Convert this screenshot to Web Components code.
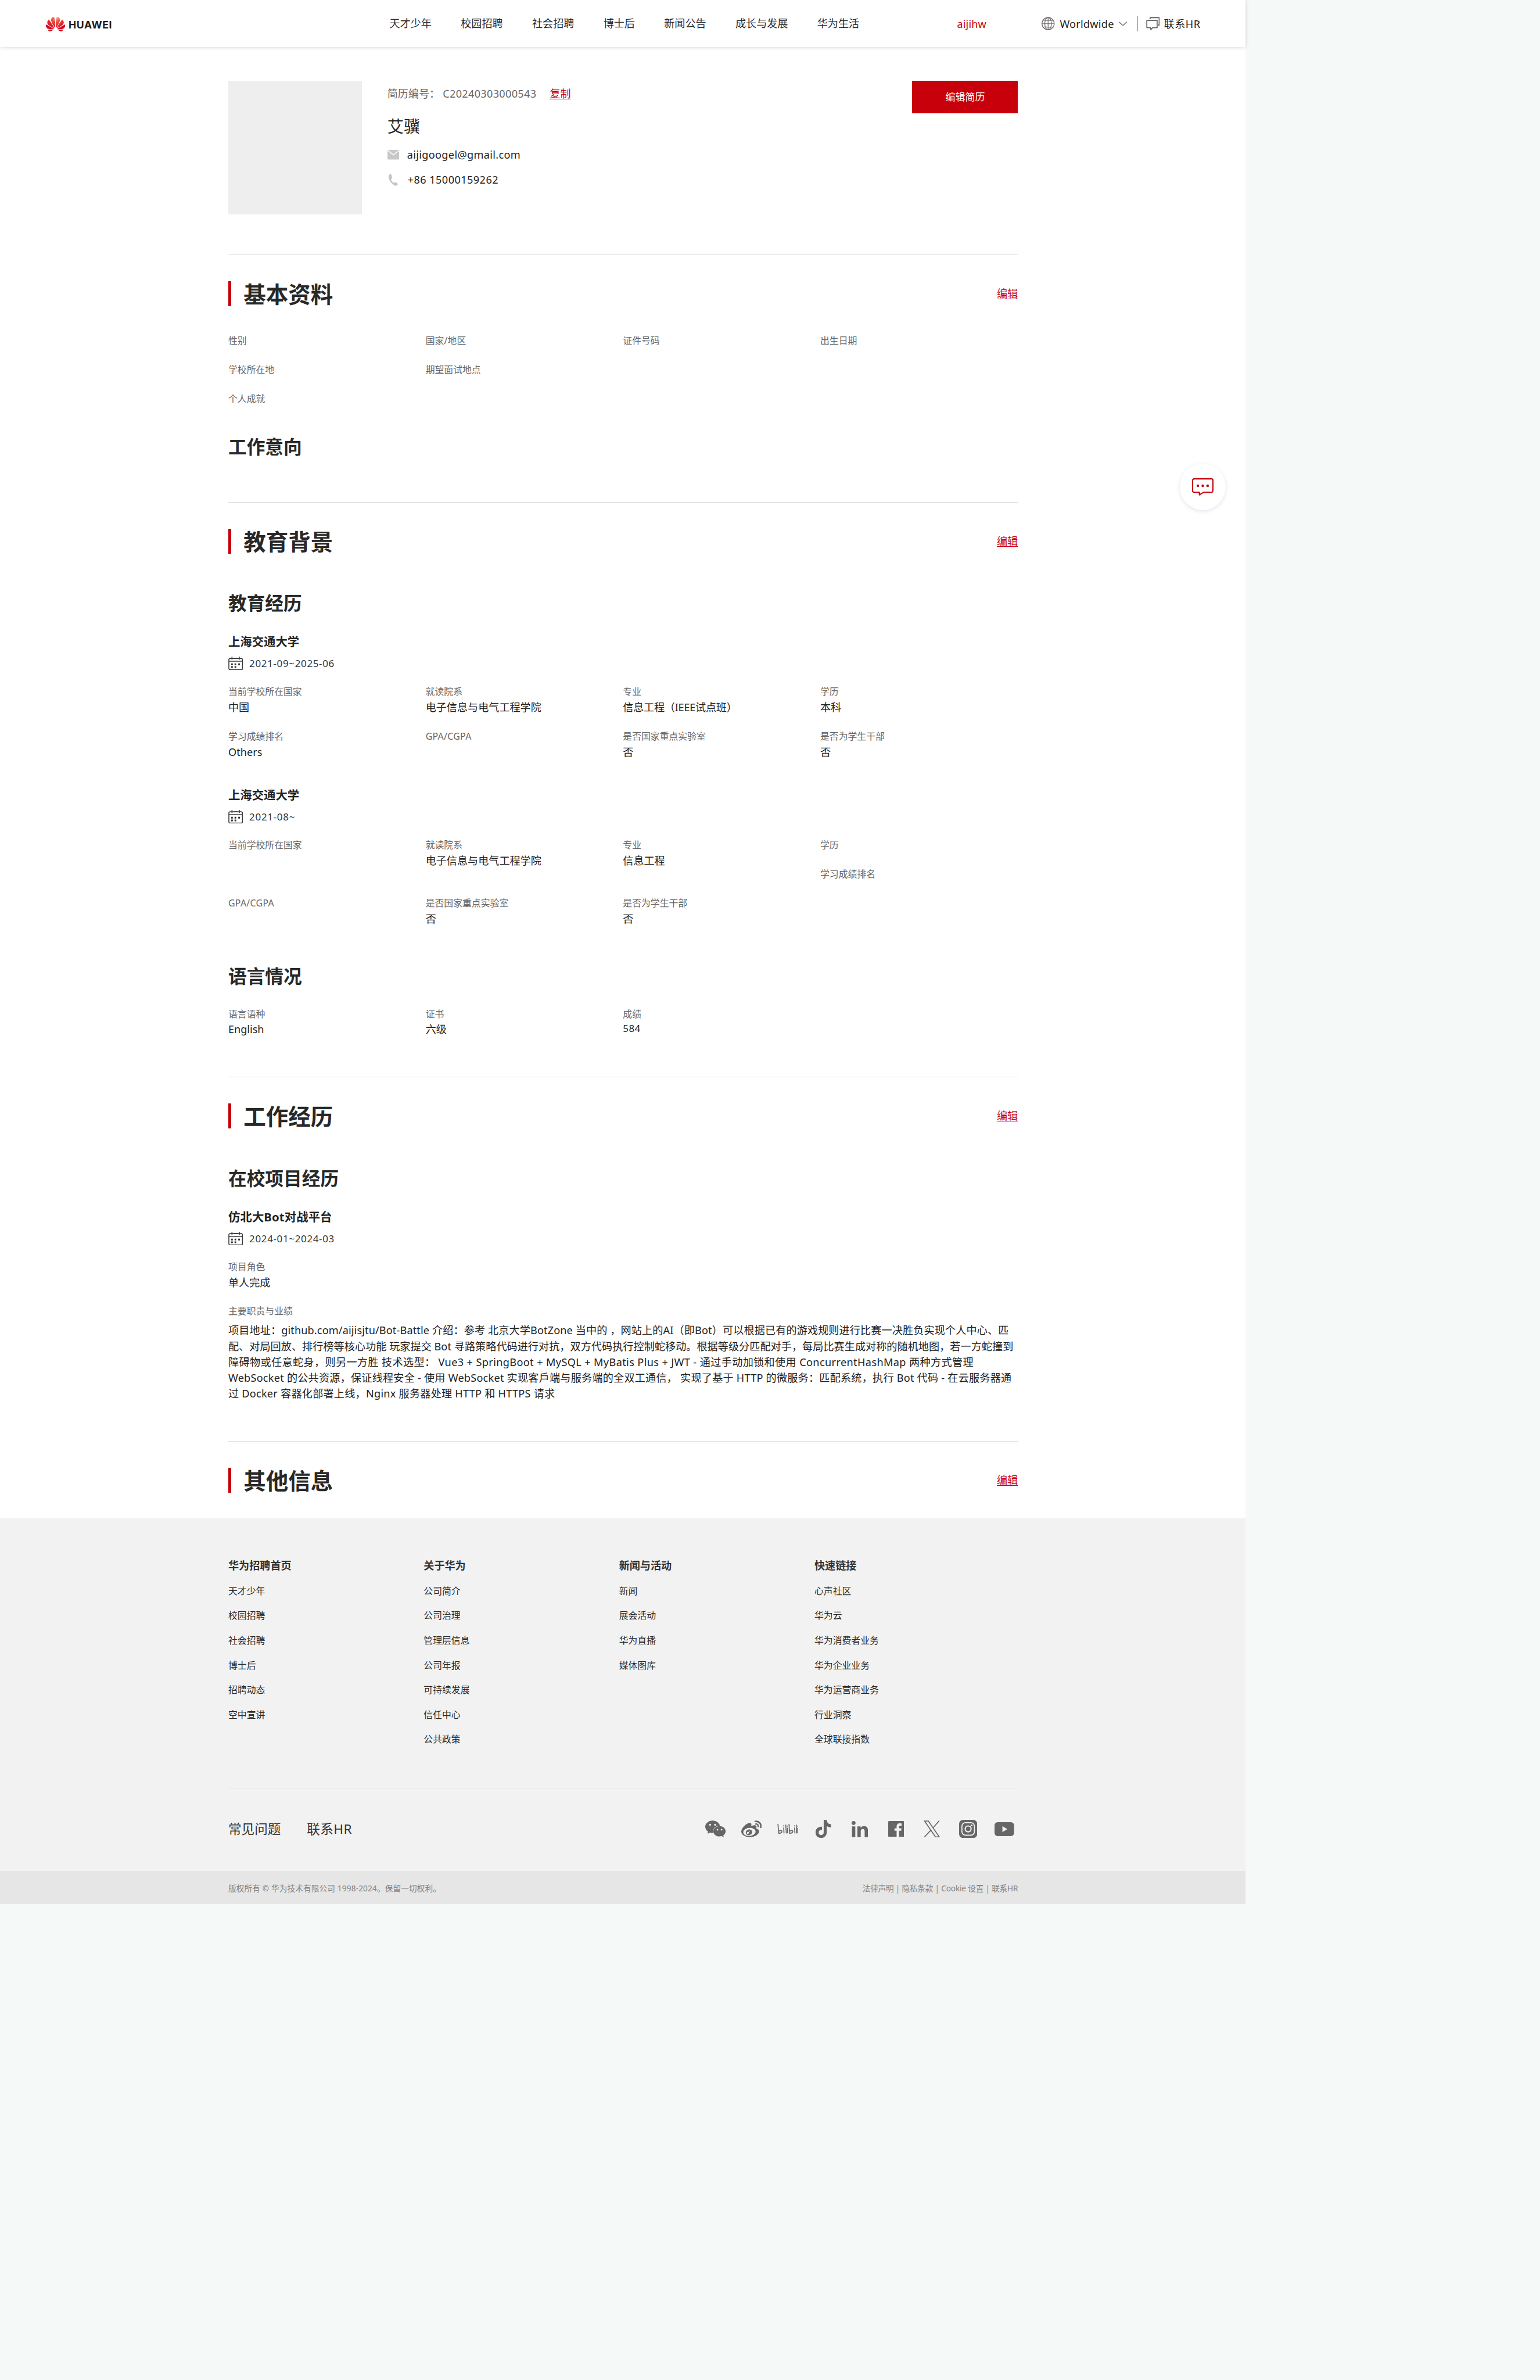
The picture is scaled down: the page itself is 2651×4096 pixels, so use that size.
<!DOCTYPE html>
<html lang="zh-CN">
<head>
<meta charset="utf-8">
<title>华为招聘 - 我的简历</title>
<style>
html{zoom:.97607;background:#f5f9f8}
body{margin:0;width:2716px;height:4196px;overflow:hidden;background:#f5f9f8;font-family:"Noto Sans","Noto Sans CJK SC",sans-serif;font-size:18.56px;line-height:27.84px;color:#222}
</style>
</head>
<body>
<resume-page>
  <site-header></site-header>
  <profile-card></profile-card>

  <resume-section heading="基本资料" style="height:436.4px">
    <field-grid style="margin-top:47px">
      <info-field label="性别"></info-field><info-field label="国家/地区" lw="71.5"></info-field><info-field label="证件号码"></info-field><info-field label="出生日期"></info-field>
      <info-field label="学校所在地"></info-field><info-field label="期望面试地点" style="grid-column:span 3"></info-field>
      <info-field label="个人成就"></info-field>
    </field-grid>
    <sub-heading style="margin-top:23px">工作意向</sub-heading>
  </resume-section>

  <resume-section heading="教育背景" style="height:1013.7px">
    <sub-heading style="margin-top:63.5px">教育经历</sub-heading>
    <entry-head name="上海交通大学" date="2021-09~2025-06" dw="150.5"></entry-head>
    <field-grid style="margin-top:22.4px">
      <info-field label="当前学校所在国家" value="中国"></info-field><info-field label="就读院系" value="电子信息与电气工程学院"></info-field><info-field label="专业" value="信息工程（IEEE试点班）" vw="201"></info-field><info-field label="学历" value="本科"></info-field>
      <info-field label="学习成绩排名" value="Others" vw="60"></info-field><info-field label="GPA/CGPA" lw="81"></info-field><info-field label="是否国家重点实验室" value="否"></info-field><info-field label="是否为学生干部" value="否"></info-field>
    </field-grid>
    <entry-head name="上海交通大学" date="2021-08~" dw="81" style="margin-top:21.6px"></entry-head>
    <field-grid style="margin-top:22.4px">
      <info-field label="当前学校所在国家"></info-field><info-field label="就读院系" value="电子信息与电气工程学院"></info-field><info-field label="专业" value="信息工程"></info-field><div><info-field label="学历"></info-field><info-field label="学习成绩排名"></info-field></div>
      <info-field label="GPA/CGPA" lw="81"></info-field><info-field label="是否国家重点实验室" value="否"></info-field><info-field label="是否为学生干部" value="否"></info-field>
    </field-grid>
    <sub-heading style="margin-top:40.3px">语言情况</sub-heading>
    <field-grid style="margin-top:28px">
      <info-field label="语言语种" value="English" vw="63"></info-field><info-field label="证书" value="六级"></info-field><info-field label="成绩" value="584" vw="31" style="--value-size:17.4px;--value-lh:24px"></info-field>
    </field-grid>
  </resume-section>

  <resume-section heading="工作经历" style="height:642.1px">
    <sub-heading style="margin-top:64px">在校项目经历</sub-heading>
    <entry-head name="仿北大Bot对战平台" nw="183" date="2024-01~2024-03" dw="150.5"></entry-head>
    <field-grid style="margin-top:22px">
      <info-field label="项目角色" value="单人完成" style="grid-column:span 4;--field-gap:22.8px"></info-field>
      <info-field label="主要职责与业绩" style="grid-column:span 4;--field-gap:0px"></info-field>
    </field-grid>
    <project-text style="margin-top:6.6px">
      <fit-text w="1376">项目地址：github.com/aijisjtu/Bot-Battle 介绍：参考 北京大学BotZone 当中的 ，网站上的AI（即Bot）可以根据已有的游戏规则进行比赛一决胜负实现个人中心、匹</fit-text>
      <fit-text w="1384">配、对局回放、排行榜等核心功能 玩家提交 Bot 寻路策略代码进行对抗，双方代码执行控制蛇移动。根据等级分匹配对手，每局比赛生成对称的随机地图，若一方蛇撞到</fit-text>
      <fit-text w="1314">障碍物或任意蛇身，则另一方胜 技术选型： Vue3 + SpringBoot + MySQL + MyBatis Plus + JWT - 通过手动加锁和使用 ConcurrentHashMap 两种方式管理</fit-text>
      <fit-text w="1381">WebSocket 的公共资源，保证线程安全 - 使用 WebSocket 实现客戶端与服务端的全双工通信， 实现了基于 HTTP 的微服务：匹配系统，执行 Bot 代码 - 在云服务器通</fit-text>
      <fit-text w="576">过 Docker 容器化部署上线，Nginx 服务器处理 HTTP 和 HTTPS 请求</fit-text>
    </project-text>
  </resume-section>

  <resume-section heading="其他信息" style="height:136.8px"></resume-section>

  <site-footer></site-footer>
  <chat-bubble></chat-bubble>
</resume-page>

<script>
const ctx = document.createElement('canvas').getContext('2d');

class Base extends HTMLElement {
  connectedCallback() {
    if (this.shadowRoot) return;
    this.attachShadow({ mode: 'open' }).innerHTML =
      '<style>:host{display:block;box-sizing:border-box}*{box-sizing:border-box}svg{display:block;flex:none}a{color:inherit;text-decoration:none}</style>' + this.render();
  }
  attr(n) { return this.getAttribute(n) || ''; }
}
const define = (name, render) => customElements.define(name, class extends Base { render() { return render(this); } });
const fit = (text, w) => w ? `<fit-text w="${w}">${text}</fit-text>` : text;

/* A single line tracked so that it occupies the given advance width. */
customElements.define('fit-text', class extends HTMLElement {
  connectedCallback() {
    if (!this.shadowRoot) this.attachShadow({ mode: 'open' }).innerHTML = '<style>:host{display:block;white-space:pre}</style><slot></slot>';
    const cs = getComputedStyle(this), text = this.textContent;
    ctx.font = `${cs.fontWeight} ${cs.fontSize} ${cs.fontFamily}`;
    this.style.letterSpacing = ((+this.getAttribute('w') - ctx.measureText(text).width) / [...text].length).toFixed(4) + 'px';
  }
});

define('resume-page', () => `<style>:host{position:relative;width:2197px;background:#fff}</style><slot></slot>`);

define('huawei-logo', () => `<style>
:host{display:flex;align-items:center;width:116px;gap:6px;color:#231815;font:700 18px/26px Inter,sans-serif}</style>
<svg width="34" height="26" viewBox="0 2.8 24 18.4"><defs><radialGradient id="g" gradientUnits="userSpaceOnUse" cx="13" cy="3" r="15"><stop offset="0" stop-color="#fbb08c"/><stop offset=".45" stop-color="#ef4a42"/><stop offset="1" stop-color="#d3081c"/></radialGradient></defs>
<path fill="url(#g)" d="M3.67 6.14S1.82 7.91 1.72 9.78v.35c.08 1.51 1.22 2.4 1.22 2.4 1.83 1.79 6.26 4.04 7.3 4.55 0 0 .06.03.1-.01l.02-.04v-.04C7.52 10.8 3.67 6.14 3.67 6.14zM9.65 18.6c-.02-.08-.1-.08-.1-.08l-7.38.26c.8 1.43 2.15 2.53 3.56 2.2.96-.25 3.16-1.78 3.88-2.3.06-.05.04-.09.04-.09zm.08-.78C6.49 15.63.21 12.28.21 12.28c-.15.46-.2.9-.21 1.3v.07c0 1.07.4 1.82.4 1.82.8 1.69 2.34 2.2 2.34 2.2.7.3 1.4.31 1.4.31.12.02 4.4 0 5.54 0 .05 0 .08-.05.08-.05v-.06c0-.03-.03-.05-.03-.05zM9.06 3.19a3.42 3.42 0 00-2.57 3.15v.41c.03.6.16 1.05.16 1.05.66 2.9 3.86 7.65 4.55 8.65.05.05.1.03.1.03a.1.1 0 00.06-.1c1.06-10.6-1.11-13.42-1.11-13.42-.32.02-1.19.23-1.19.23zm8.3 2.27s-.49-1.8-2.44-2.28c0 0-.57-.14-1.17-.22 0 0-2.18 2.81-1.12 13.43.01.07.06.08.06.08.07.03.1-.03.1-.03.72-1.03 3.9-5.76 4.55-8.64 0 0 .36-1.4.02-2.34zm-2.92 13.07s-.07 0-.09.05c0 0-.01.07.03.1.7.51 2.85 2 3.88 2.3 0 0 .16.05.43.06h.14c.69-.02 1.9-.37 3-2.26l-7.4-.25zm7.83-8.41c.14-2.06-1.94-3.97-1.94-3.98 0 0-3.85 4.66-6.67 10.8 0 0-.03.08.02.13l.04.01h.06c1.06-.53 5.46-2.77 7.28-4.54 0 0 1.15-.93 1.21-2.42zm1.52 2.14s-6.28 3.37-9.52 5.55c0 0-.05.04-.03.11 0 0 .03.06.07.06 1.16 0 5.56 0 5.67-.02 0 0 .57-.02 1.27-.29 0 0 1.56-.5 2.37-2.27 0 0 .73-1.45.17-3.14z"/></svg>
<fit-text w="77" style="padding-top:3px">HUAWEI</fit-text>`);

define('site-header', () => `<style>
:host{position:relative;height:83px;background:#fff;box-shadow:0 1px 7px rgba(0,0,0,.17)}
header{display:flex;align-items:center;height:83px;padding-left:81px;white-space:nowrap}
huawei-logo{flex:none;margin-top:2px}
nav{display:flex;gap:51.5px;margin-left:490px;color:#282b33}
.user{color:#c7000b;margin:3px 0 0 172.5px;width:51.5px}
.world{display:flex;align-items:center;margin-left:98px;color:#222}
.world fit-text{margin:2px 9px 0 8.7px}
i{width:1.1px;height:26px;background:#222;margin:1px 15px 0 17px}
.hr{margin:3px 0 0 7.5px}</style>
<header><huawei-logo></huawei-logo>
<nav>${['天才少年','校园招聘','社会招聘','博士后','新闻公告','成长与发展','华为生活'].map(t => `<a>${t}</a>`).join('')}</nav>
<fit-text class="user" w="51.5">aijihw</fit-text>
<div class="world"><svg width="23" height="24" viewBox="0 0 23 24" fill="none" stroke="#6b6363" stroke-width="1.2"><circle cx="11.5" cy="12" r="10.8"/><ellipse cx="11.5" cy="12" rx="5.8" ry="10.8"/><path d="M11.5 1v22M1 12h21M2.8 6h17.4M2.8 18h17.4"/></svg>
<fit-text w="95.5">Worldwide</fit-text>
<svg width="14.5" height="8" viewBox="0 0 14.5 8" fill="none" stroke="#666" stroke-width="1.4"><path d="M.5.7l6.7 6.4L14 .7"/></svg></div><i></i>
<svg width="24" height="24" viewBox="0 0 24 24" fill="none" stroke="#555" stroke-width="1.8" stroke-linejoin="round"><path d="M7 4V1.4h16v13.2h-2.4"/><path d="M1.2 6.2h18.2V19h-8l-3.2 3.6L7.8 19H1.2z" stroke="#6a6a6a"/></svg>
<fit-text class="hr" w="64.5">联系HR</fit-text></header>`);

define('profile-card', () => `<style>
:host{display:flex;align-items:flex-start;height:365.3px;padding:59px 0 0 402.6px}
.photo{width:236px;height:236px;background:#eee;flex:none}
.info{width:926px;margin-left:44.4px;padding-top:10px}
.id{display:flex;color:#666;white-space:pre}
.id a{color:#c7000b;text-decoration:underline;text-decoration-thickness:1.4px;text-underline-offset:2px}
h1{font-weight:400;font-size:29px;line-height:40px;margin:23px 0 16.5px;color:#222}
.line{display:flex;align-items:center;height:28px;margin-bottom:15.6px}
.line svg{margin-right:14px}
button{width:186.5px;height:58px;border:0;background:#c7000b;color:#fff;font:17.4px/58px "Noto Sans","Noto Sans CJK SC",sans-serif;padding:0}</style>
<div class="photo"></div>
<div class="info">
<div class="id"><span style="width:98px">简历编号：</span><fit-text w="165" style="width:188.7px">C20240303000543</fit-text><a>复制</a></div>
<h1>艾骥</h1>
<div class="line"><svg width="21" height="17" viewBox="0 0 21 17"><rect width="21" height="17" rx="1.6" fill="#c8c8c8"/><path d="M.8 1.2l9.7 7.6 9.7-7.6" fill="none" stroke="#fff" stroke-width="1.5"/></svg><fit-text w="200">aijigoogel@gmail.com</fit-text></div>
<div class="line"><svg width="21" height="22" viewBox="0 0 21 22" style="margin-right:15px"><path fill="#c4c4c4" d="M4.4 1C2.4 1.7 1.6 4 2.1 7c.9 5.5 6.2 12 11.3 14 2.3.8 4.4-.7 4.7-2.6.1-.7-.1-1-.7-1.4l-3-1.9c-.6-.4-1.2-.3-1.7.2l-1.3 1.2c-2.3-1.3-4.6-4.2-5.2-7l1.5-1.1c.5-.4.7-.9.5-1.6L7 2.2C6.5.9 5.6.6 4.4 1z"/></svg><fit-text w="160">+86 15000159262</fit-text></div>
</div>
<button>编辑简历</button>`);

define('resume-section', el => `<style>
:host{margin-left:402.6px;width:1392.6px;border-top:1.3px solid #dcdcdc}
header{display:flex;align-items:center;height:91px;padding-top:45.8px}
header::before{content:"";width:5px;height:44px;background:#c7000b;margin-right:22px}
h2{font-size:39.44px;line-height:44px;margin:2px auto 0 0;color:#282828}
header a{color:#c7000b;text-decoration:underline;text-decoration-thickness:1.4px;text-underline-offset:2px}</style>
<header><h2>${el.attr('heading')}</h2><a>编辑</a></header><slot></slot>`);

define('sub-heading', () => `<style>:host{font-size:32.48px;font-weight:700;line-height:48px;color:#282828}</style><slot></slot>`);

define('entry-head', el => `<style>
:host{margin-top:27.8px}
h4{font-size:20.88px;line-height:32px;margin:0 0 7.7px;color:#222}
div{display:flex;align-items:center;gap:11px;height:28px;font-size:17.4px;color:#333}</style>
<h4>${fit(el.attr('name'), el.attr('nw'))}</h4>
<div><svg width="26" height="24" viewBox="0 0 26 24" fill="none" stroke="#3c3c3c" stroke-width="1.6"><rect x="1" y="3.2" width="24" height="20" rx="2.3"/><path d="M1 8.2h24M6.500 0v5.4M19.5 0v5.4M10 3.2h6"/><g fill="#333" stroke="none"><path d="M5 12h3v3H5zM11 12h3v3h-3zM17.500 12h3v3h-3zM5 17h3v3H5zM11 17h3v3h-3z"/></g></svg>${fit(el.attr('date'), el.attr('dw'))}</div>`);

define('field-grid', () => `<style>:host{display:grid;grid-template-columns:repeat(4,348px);align-items:start}</style><slot></slot>`);

define('info-field', el => `<style>
:host{padding-bottom:var(--field-gap,23.7px);white-space:nowrap}
.l{font-size:16.24px;line-height:27.5px;color:#666}
.v{font-size:var(--value-size,18.56px);line-height:var(--value-lh,28px);color:#222}</style>
<div class="l">${fit(el.attr('label'), el.attr('lw'))}</div>${el.attr('value') ? `<div class="v">${fit(el.attr('value'), el.attr('vw'))}</div>` : ''}`);

define('project-text', () => `<style>:host{color:#222;line-height:27.8px}</style><slot></slot>`);

const icons = [
 [36,29.5,'0 2.1 24 19.8','<path d="M8.691 2.188C3.891 2.188 0 5.476 0 9.53c0 2.212 1.17 4.203 3.002 5.55a.59.59 0 0 1 .213.665l-.39 1.48c-.019.07-.048.141-.048.213 0 .163.13.295.29.295a.326.326 0 0 0 .167-.054l1.903-1.114a.864.864 0 0 1 .717-.098 10.16 10.16 0 0 0 2.837.403c.276 0 .543-.027.811-.05-.857-2.578.157-4.972 1.932-6.446 1.703-1.415 3.882-1.98 5.853-1.838-.576-3.583-4.196-6.348-8.596-6.348zM5.785 5.991c.642 0 1.162.529 1.162 1.18a1.17 1.17 0 0 1-1.162 1.178A1.17 1.17 0 0 1 4.623 7.17c0-.651.52-1.18 1.162-1.18zm5.813 0c.642 0 1.162.529 1.162 1.18a1.17 1.17 0 0 1-1.162 1.178 1.17 1.17 0 0 1-1.162-1.178c0-.651.52-1.18 1.162-1.18zm5.34 2.867c-1.797-.052-3.746.512-5.28 1.786-1.72 1.428-2.687 3.72-1.78 6.22.942 2.453 3.666 4.229 6.884 4.229.826 0 1.622-.12 2.361-.336a.722.722 0 0 1 .598.082l1.584.926a.272.272 0 0 0 .14.047c.134 0 .24-.111.24-.247 0-.06-.023-.12-.038-.177l-.327-1.233a.582.582 0 0 1-.023-.156.49.49 0 0 1 .201-.398C23.024 18.48 24 16.82 24 14.98c0-3.21-2.931-5.837-6.656-6.088V8.89c-.135-.01-.27-.027-.407-.03zm-2.53 3.274c.535 0 .969.44.969.982a.976.976 0 0 1-.969.983.976.976 0 0 1-.969-.983c0-.542.434-.982.97-.982zm4.844 0c.535 0 .969.44.969.982a.976.976 0 0 1-.969.983.976.976 0 0 1-.969-.983c0-.542.434-.982.969-.982z"/>'],
 [36,29.5,'0 2.1 24 19.7','<path d="M10.098 20.323c-3.977.391-7.414-1.406-7.672-4.02-.259-2.609 2.759-5.047 6.74-5.441 3.979-.394 7.413 1.404 7.671 4.018.259 2.6-2.759 5.049-6.737 5.439zM9.05 17.219c-.384.616-1.208.884-1.829.602-.612-.279-.793-.991-.406-1.593.379-.595 1.176-.861 1.793-.601.622.263.82.972.442 1.592zm1.27-1.627c-.141.237-.449.353-.689.253-.236-.09-.313-.361-.177-.586.138-.227.436-.346.672-.24.239.09.315.36.18.601zm.176-2.719c-1.893-.493-4.033.45-4.857 2.118-.836 1.704-.026 3.591 1.886 4.21 1.983.64 4.318-.341 5.132-2.179.8-1.793-.201-3.642-2.161-4.149zm7.563-1.224c-.346-.105-.57-.18-.405-.615.375-.977.42-1.804 0-2.404-.781-1.112-2.915-1.053-5.364-.03 0 0-.766.331-.571-.271.376-1.217.315-2.224-.27-2.809-1.338-1.337-4.869.045-7.888 3.08C1.309 10.87 0 13.273 0 15.348c0 3.981 5.099 6.395 10.086 6.395 6.536 0 10.888-3.801 10.888-6.82 0-1.822-1.547-2.854-2.915-3.284zm1.908-5.092c-.766-.856-1.908-1.187-2.96-.962-.436.09-.706.511-.616.932.09.42.511.691.932.602.511-.105 1.067.044 1.442.465.376.421.466.977.316 1.473-.136.406.089.856.51.992.405.119.857-.105.992-.512.33-1.021.12-2.178-.646-3.035zm2.418-2.195c-1.576-1.757-3.905-2.419-6.054-1.968-.496.104-.812.587-.706 1.081.104.496.586.813 1.082.707 1.532-.331 3.185.15 4.296 1.383 1.112 1.246 1.429 2.943.947 4.416-.165.48.106 1.007.586 1.157.479.165.991-.104 1.157-.586.675-2.088.241-4.478-1.338-6.235z"/>'],
 [37,19.5,'0 0 37 19.5','<g fill="none" stroke="#666" stroke-width="1.7" stroke-linecap="round" stroke-linejoin="round"><path d="M1.2 1.5l1.6 16.3c3.6-.2 6-2.200 5.500-3.900-.4-1.500-2.900-1.700-5.700-.2M11.300 8l.6 9M15 3l1 14.200M18.200 8.500l.1 8.500M20.700 1.500l1.300 16.300c3.600-.2 6-2.200 5.500-3.900-.4-1.500-2.900-1.700-5.700-.2M30.600 8l.5 9M33.500 3l.6 14.200M36.100 8.500v8.500"/><path d="M10.800 4.300v.3M18 4.800v.3M30.200 4.300v.3M36 4.800v.3"/></g>'],
 [27.5,32,'1.7 0 20.8 24','<path d="M12.525.02c1.31-.02 2.61-.01 3.91-.02.08 1.53.63 3.09 1.75 4.17 1.12 1.11 2.7 1.62 4.24 1.79v4.03c-1.44-.05-2.89-.35-4.2-.97-.57-.26-1.1-.59-1.62-.93-.01 2.92.01 5.84-.02 8.75-.08 1.4-.54 2.79-1.35 3.94-1.31 1.92-3.58 3.17-5.91 3.21-1.43.08-2.86-.31-4.08-1.03-2.02-1.19-3.44-3.37-3.65-5.71-.02-.5-.03-1-.01-1.49.18-1.9 1.12-3.72 2.58-4.96 1.66-1.44 3.98-2.13 6.15-1.72.02 1.48-.04 2.96-.04 4.44-.99-.32-2.15-.23-3.02.37-.63.41-1.11 1.04-1.36 1.75-.21.51-.15 1.07-.14 1.61.24 1.64 1.82 3.02 3.5 2.87 1.12-.01 2.19-.66 2.77-1.61.19-.33.4-.67.41-1.06.1-1.79.06-3.57.07-5.36.01-4.03-.01-8.05.02-12.07z"/>'],
 [29,28.5,'0 0 29 28.5','<circle cx="3.5" cy="3.5" r="3.4"/><path d="M.6 9.4h5.9v19H.6zM10.2 9.4h5.7V12c.9-1.6 2.9-3.1 5.9-3.1 6 0 7.1 3.8 7.1 9v10.5H23v-9.3c0-2.3 0-5-3.2-5s-3.7 2.3-3.7 4.9v9.4h-5.9z"/>'],
 [28,28,'0 0 28 28','<path d="M1.6 0h24.8C27.3 0 28 .7 28 1.6v24.8c0 .9-.7 1.6-1.6 1.6h-7.2V17.2h3.6l.6-4.3h-4.2v-2.7c0-1.2.4-2.1 2.2-2.1h2.2V4.3c-.4 0-1.7-.2-3.3-.2-3.3 0-5.5 2-5.5 5.6v3.2h-3.7v4.300h3.700V28H1.600C.7 28 0 27.300 0 26.400V1.600C0 .7.7 0 1.600 0z"/>'],
 [29,30,'0 0 29 30','<g fill="none" stroke="#666" stroke-width="1.7"><path d="M1.6 1h6.700l19.200 28h-6.700z"/><path d="M27.500.5L16.300 13.300M12.900 17.100L1 29.700"/></g>'],
 [32,32,'0 0 32 32','<rect width="32" height="32" rx="7"/><rect x="5" y="5" width="22" height="22" rx="6" fill="none" stroke="#f2f2f2" stroke-width="1.8"/><circle cx="16" cy="16" r="5.2" fill="none" stroke="#f2f2f2" stroke-width="2.2"/><circle cx="22.3" cy="9.7" r="1.5" fill="#f2f2f2"/>'],
 [34.5,29.5,'0 0 34.5 29.5','<rect width="34.5" height="29.5" y="0" rx="6"/><path fill="#f2f2f2" d="M13.9 9.500v10.500l8.700-5.250z"/>']
];
icons[8] = [34.5, 24.5, '0 0 34.5 24.5', '<rect width="34.5" height="24.5" rx="5.5"/><path fill="#f2f2f2" d="M13.9 7v10.500l8.700-5.250z"/>'];
define('social-links', () => `<style>:host{display:flex;align-items:center;margin-right:-8px}span{width:63.75px;display:flex;justify-content:center}</style>` +
  icons.map(([w,h,vb,p]) => `<span><svg width="${w}" height="${h}" viewBox="${vb}" preserveAspectRatio="none" fill="#666">${p}</svg></span>`).join(''));

define('link-column', el => `<style>
h5{font-size:18.56px;line-height:28px;margin:0 0 9.2px;color:#333}
a{display:block;font-size:16.24px;line-height:43.6px;color:#282828}</style>
<h5>${el.attr('heading')}</h5>${el.attr('links').split(',').map(t => `<a>${t}</a>`).join('')}`);

define('site-footer', () => `<style>
:host{background:#f2f2f2;white-space:nowrap}
.cols{display:grid;grid-template-columns:repeat(4,344.6px);height:476.4px;padding-top:69px;margin-left:402.6px;width:1392.6px;border-bottom:1.3px solid #e6e7e7}
.mid{display:flex;align-items:center;height:145.3px;padding-bottom:3px;margin-left:402.6px;width:1392.6px;font-size:23.2px;color:#333}
.mid a{margin-right:46px}
.mid social-links{margin-left:auto}
.end{display:flex;align-items:center;justify-content:space-between;height:58.6px;padding:1.5px 401.8px 0 402.6px;background:#e6e6e6;font-size:13.92px;color:#828282}</style>
<div class="cols">
<link-column heading="华为招聘首页" links="天才少年,校园招聘,社会招聘,博士后,招聘动态,空中宣讲"></link-column>
<link-column heading="关于华为" links="公司简介,公司治理,管理层信息,公司年报,可持续发展,信任中心,公共政策"></link-column>
<link-column heading="新闻与活动" links="新闻,展会活动,华为直播,媒体图库"></link-column>
<link-column heading="快速链接" links="心声社区,华为云,华为消费者业务,华为企业业务,华为运营商业务,行业洞察,全球联接指数"></link-column>
</div>
<div class="mid"><a>常见问题</a><fit-text w="79.5">联系HR</fit-text><social-links></social-links></div>
<div class="end"><fit-text w="375">版权所有 © 华为技术有限公司 1998-2024。保留一切权利。</fit-text><fit-text w="274">法律声明 | 隐私条款 | Cookie 设置 | 联系HR</fit-text></div>`);

define('chat-bubble', () => `<style>
:host{position:absolute;left:2081px;top:818px;width:81px;height:82px;border-radius:50%;background:#fff;box-shadow:0 2px 8px rgba(40,80,130,.15);display:flex;align-items:center;justify-content:center}</style>
<svg width="38" height="31" viewBox="0 0 38 31" fill="none" stroke="#c7000b" stroke-width="2.2" stroke-linejoin="round"><path d="M3.5 1.2h30.8a2.5 2.5 0 0 1 2.5 2.5v18.6a2.5 2.5 0 0 1-2.5 2.5H20.5L13 29.3v-4.500H3.500A2.500 2.500 0 0 1 1 22.300V3.700a2.500 2.500 0 0 1 2.500-2.500z"/><g fill="#c7000b" stroke="none"><circle cx="10.3" cy="13.3" r="2.3"/><circle cx="18.9" cy="13.3" r="2.3"/><circle cx="27.5" cy="13.3" r="2.3"/></g></svg>`);
</script>
</body>
</html>
